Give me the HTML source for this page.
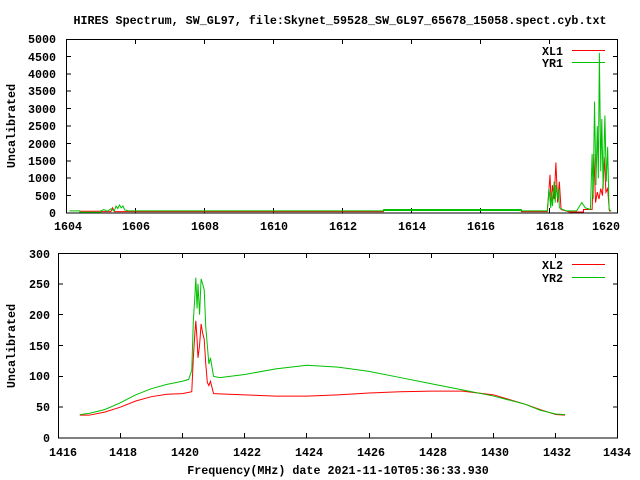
<!DOCTYPE html>
<html><head><meta charset="utf-8"><style>
html,body{margin:0;padding:0;background:#fff;width:640px;height:480px;overflow:hidden}
svg text{font-family:"Liberation Mono",monospace;font-weight:bold;font-size:11.7px;fill:#000}
</style></head><body>
<svg width="640" height="480" viewBox="0 0 640 480" xmlns="http://www.w3.org/2000/svg">
<text x="340" y="24" text-anchor="middle">HIRES Spectrum, SW_GL97, file:Skynet_59528_SW_GL97_65678_15058.spect.cyb.txt</text>

<!-- TOP PLOT -->
<g stroke="#000" stroke-width="1" fill="none" shape-rendering="crispEdges">
<rect x="66.5" y="39.5" width="551" height="173.5"/>
<path d="M66 195.6h5M66 178.2h5M66 160.8h5M66 143.4h5M66 126h5M66 108.6h5M66 91.2h5M66 73.8h5M66 56.4h5
M618 195.6h-5M618 178.2h-5M618 160.8h-5M618 143.4h-5M618 126h-5M618 108.6h-5M618 91.2h-5M618 73.8h-5M618 56.4h-5
M135.5 213v-5M204.5 213v-5M273.5 213v-5M342.5 213v-5M411.5 213v-5M480.5 213v-5M549.5 213v-5
M135.5 39v5M204.5 39v5M273.5 39v5M342.5 39v5M411.5 39v5M480.5 39v5M549.5 39v5"/>
</g>
<g>
<text x="56" y="217" text-anchor="end">0</text>
<text x="56" y="200" text-anchor="end">500</text>
<text x="56" y="182" text-anchor="end">1000</text>
<text x="56" y="165" text-anchor="end">1500</text>
<text x="56" y="148" text-anchor="end">2000</text>
<text x="56" y="130" text-anchor="end">2500</text>
<text x="56" y="113" text-anchor="end">3000</text>
<text x="56" y="95" text-anchor="end">3500</text>
<text x="56" y="78" text-anchor="end">4000</text>
<text x="56" y="61" text-anchor="end">4500</text>
<text x="56" y="43" text-anchor="end">5000</text>
<text x="68" y="230" text-anchor="middle">1604</text>
<text x="136" y="230" text-anchor="middle">1606</text>
<text x="205" y="230" text-anchor="middle">1608</text>
<text x="274" y="230" text-anchor="middle">1610</text>
<text x="343" y="230" text-anchor="middle">1612</text>
<text x="412" y="230" text-anchor="middle">1614</text>
<text x="481" y="230" text-anchor="middle">1616</text>
<text x="550" y="230" text-anchor="middle">1618</text>
<text x="606" y="230" text-anchor="middle">1620</text>
</g>
<text transform="translate(15,126) rotate(-90)" text-anchor="middle">Uncalibrated</text>
<g transform="translate(66,213) scale(34.5,-0.0348) translate(-1604,0)" fill="none">
<polyline vector-effect="non-scaling-stroke" stroke="#ff0000" stroke-width="1" points="1604.4,50 1605,50 1605,40 1605.3,40 1605.35,150 1605.4,40 1613.2,40 1613.2,85 1617.2,85 1617.2,40 1617.95,40 1618,700 1618.03,1100 1618.06,300 1618.1,800 1618.15,400 1618.2,1450 1618.25,300 1618.3,900 1618.35,100 1618.6,30 1619,30 1619,100 1619.25,100 1619.3,1700 1619.35,300 1619.4,600 1619.45,400 1619.5,700 1619.55,500 1619.6,1600 1619.65,600 1619.7,700 1619.75,60 1619.8,60"/>
<polyline vector-effect="non-scaling-stroke" stroke="#00c000" stroke-width="1" points="1604.1,60 1604.4,60 1604.4,20 1605,20 1605,60 1605.1,100 1605.2,50 1605.3,120 1605.4,60 1605.45,200 1605.5,130 1605.55,230 1605.6,150 1605.65,200 1605.7,90 1605.8,60 1613.2,60 1613.2,90 1617.2,90 1617.2,60 1617.95,60 1617.98,400 1618,700 1618.05,150 1618.08,600 1618.1,200 1618.15,900 1618.18,300 1618.2,800 1618.25,400 1618.28,700 1618.3,150 1618.4,100 1618.5,60 1618.8,60 1618.95,300 1619.05,150 1619.2,100 1619.25,1700 1619.28,400 1619.32,3200 1619.36,800 1619.4,2500 1619.43,1000 1619.46,4600 1619.5,1200 1619.53,2700 1619.57,700 1619.62,2800 1619.66,900 1619.7,1900 1619.74,100 1619.8,60"/>
<polyline vector-effect="non-scaling-stroke" stroke="#00c000" stroke-width="2" points="1613.2,85 1617.2,85"/>
</g>
<text x="563" y="55" text-anchor="end">XL1</text>
<line x1="572" y1="50.5" x2="605" y2="50.5" stroke="#ff0000"/>
<text x="563" y="67" text-anchor="end">YR1</text>
<line x1="572" y1="62.5" x2="605" y2="62.5" stroke="#00c000"/>

<!-- BOTTOM PLOT -->
<g stroke="#000" stroke-width="1" fill="none" shape-rendering="crispEdges">
<rect x="58.5" y="253.5" width="559" height="184.5"/>
<path d="M58 407.2h5M58 376.3h5M58 345.5h5M58 314.7h5M58 283.8h5
M618 407.2h-5M618 376.3h-5M618 345.5h-5M618 314.7h-5M618 283.8h-5
M120.5 438v-5M182.5 438v-5M244.5 438v-5M306.5 438v-5M369.5 438v-5M431.5 438v-5M493.5 438v-5M555.5 438v-5
M120.5 253v5M182.5 253v5M244.5 253v5M306.5 253v5M369.5 253v5M431.5 253v5M493.5 253v5M555.5 253v5"/>
</g>
<g>
<text x="50" y="442" text-anchor="end">0</text>
<text x="50" y="411" text-anchor="end">50</text>
<text x="50" y="380" text-anchor="end">100</text>
<text x="50" y="350" text-anchor="end">150</text>
<text x="50" y="319" text-anchor="end">200</text>
<text x="50" y="288" text-anchor="end">250</text>
<text x="50" y="258" text-anchor="end">300</text>
<text x="63" y="456" text-anchor="middle">1416</text>
<text x="123" y="456" text-anchor="middle">1418</text>
<text x="185" y="456" text-anchor="middle">1420</text>
<text x="247" y="456" text-anchor="middle">1422</text>
<text x="309" y="456" text-anchor="middle">1424</text>
<text x="371" y="456" text-anchor="middle">1426</text>
<text x="433" y="456" text-anchor="middle">1428</text>
<text x="495" y="456" text-anchor="middle">1430</text>
<text x="557" y="456" text-anchor="middle">1432</text>
<text x="617" y="456" text-anchor="middle">1434</text>
</g>
<text transform="translate(15,346) rotate(-90)" text-anchor="middle">Uncalibrated</text>
<text x="338" y="474" text-anchor="middle">Frequency(MHz) date 2021-11-10T05:36:33.930</text>
<g transform="translate(58,438) scale(31.11,-0.6167) translate(-1416,0)" fill="none">
<polyline vector-effect="non-scaling-stroke" stroke="#ff0000" stroke-width="1" points="1416.7,37 1417,37 1417.5,42 1418,50 1418.5,60 1419,67 1419.5,71 1420,72 1420.3,75 1420.35,130 1420.4,170 1420.43,190 1420.47,160 1420.5,130 1420.55,150 1420.6,185 1420.65,170 1420.7,160 1420.75,120 1420.8,90 1420.85,85 1420.9,92 1421,72 1422,70 1423,68 1424,68 1425,70 1426,73 1427,75 1428,76 1429,76 1430,70 1431,55 1431.5,46 1432,38 1432.3,37"/>
<polyline vector-effect="non-scaling-stroke" stroke="#00c000" stroke-width="1" points="1416.7,38 1417,40 1417.5,46 1418,57 1418.5,70 1419,80 1419.5,87 1420,92 1420.2,95 1420.3,110 1420.35,190 1420.4,230 1420.43,260 1420.47,210 1420.5,250 1420.55,200 1420.6,258 1420.65,250 1420.7,240 1420.75,180 1420.8,150 1420.85,120 1420.9,130 1421,100 1421.2,98 1422,103 1423,112 1424,118 1425,115 1426,108 1427,98 1428,88 1429,78 1430,68 1431,55 1431.5,45 1432,39 1432.3,38"/>
</g>
<text x="563" y="269" text-anchor="end">XL2</text>
<line x1="572" y1="264.5" x2="605" y2="264.5" stroke="#ff0000"/>
<text x="563" y="282" text-anchor="end">YR2</text>
<line x1="572" y1="277.5" x2="605" y2="277.5" stroke="#00c000"/>
</svg>
</body></html>
